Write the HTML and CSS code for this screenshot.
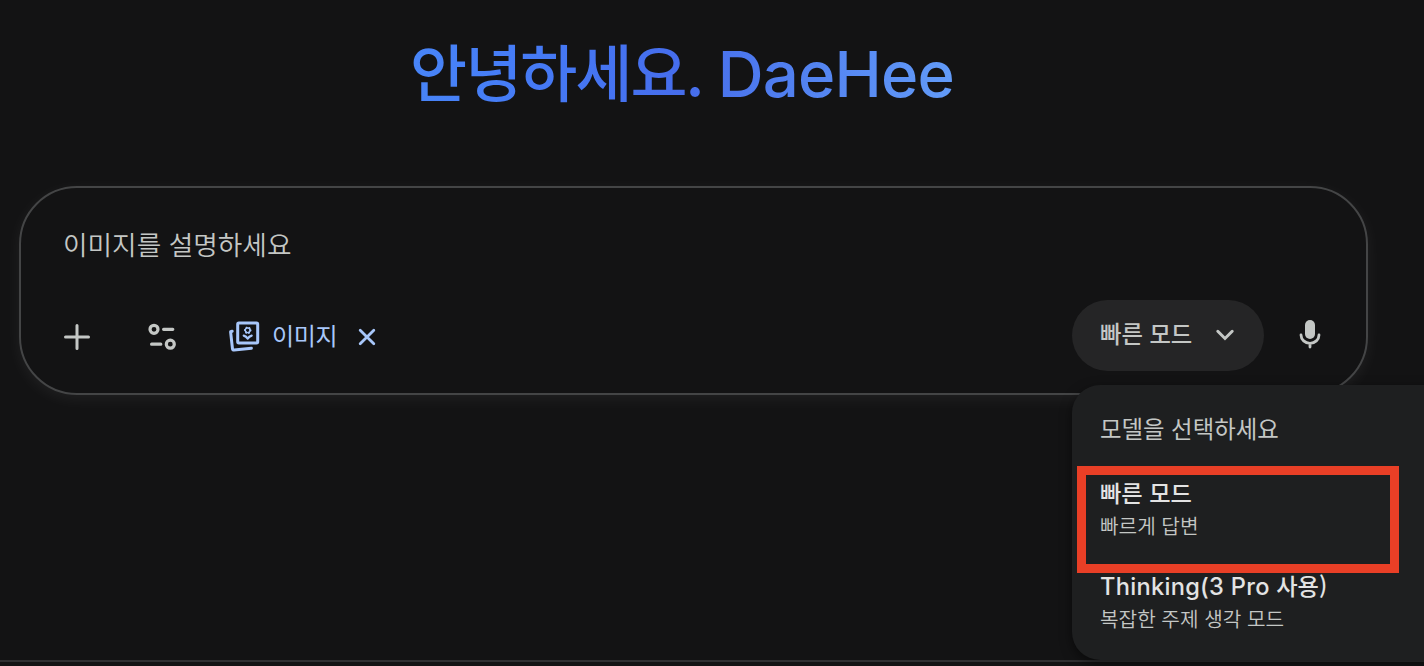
FILE: index.html
```
<!DOCTYPE html>
<html lang="ko">
<head>
    <meta charset="UTF-8">
    <meta name="viewport" content="width=device-width, initial-scale=1.0">
    <title>DaeHee</title>
    <link rel="stylesheet" href="styles.css">
</head>
<body>
    <main class="page">
        <h1 class="greeting">안녕하세요. <span class="name">DaeHee</span></h1>

        <div class="prompt">
            <div class="placeholder">이미지를 설명하세요</div>
            <div class="toolbar">
                <div class="tools">
                    <svg width="28" height="28" viewBox="0 0 28 28" fill="none" stroke="#c4c7c5" stroke-width="3" stroke-linecap="round">
                        <path d="M14 2.5v23M2.5 14h23"/>
                    </svg>
                    <svg class="icon-tune" width="30" height="30" viewBox="0 0 30 30" fill="none" stroke="#c4c7c5" stroke-width="3.2" stroke-linecap="round">
                        <circle cx="7" cy="7.3" r="4"/>
                        <path d="M16.6 7.3h9.2M4.6 22.2h9.2"/>
                        <circle cx="23.3" cy="22.2" r="4"/>
                    </svg>
                    <div class="chip">
                        <svg width="32" height="32" viewBox="0 0 32 32" fill="none" stroke="#a8c7fa" stroke-width="3" stroke-linecap="round" stroke-linejoin="round">
                            <rect x="9.7" y="2" width="20" height="20" rx="1.2"/>
                            <path d="M4.2 10.3L2.6 10.8l1.9 17q.2 1.5 1.6 1.3L23.4 27.2"/>
                            <circle cx="19.7" cy="9.3" r="2.7" stroke-width="2.2" stroke-dasharray=".1 2.727"/>
                            <circle cx="19.7" cy="9.3" r="2.4" stroke-width="1.3"/>
                            <path d="M15.7 14.6q2.6.8 4 3q1.4-2.2 4-3" stroke-width="2.2"/>
                        </svg>
                        <span>이미지</span>
                        <svg class="icon-close" width="20" height="20" viewBox="0 0 20 20" fill="none" stroke="#a8c7fa" stroke-width="2.8" stroke-linecap="round">
                            <path d="M3.2 3.2l13.6 13.6M16.8 3.2L3.2 16.8"/>
                        </svg>
                    </div>
                </div>
                <div class="mode">
                    <span>빠른 모드</span>
                    <svg width="20" height="14" viewBox="0 0 20 14" fill="none" stroke="#c4c7c5" stroke-width="3" stroke-linecap="round">
                        <path d="M2.8 3.3L10 10.5l7.2-7.2"/>
                    </svg>
                </div>
                <svg class="icon-mic" width="24" height="30" viewBox="0 0 24 30">
                    <rect x="7" y="0" width="10" height="19" rx="5" fill="#c4c7c5"/>
                    <path d="M3 15a9 8.3 0 0 0 18 0M12 23.5v3.5" fill="none" stroke="#c4c7c5" stroke-width="2.8" stroke-linecap="round"/>
                </svg>
            </div>
        </div>

        <div class="menu">
            <div class="menu-title">모델을 선택하세요</div>
            <div class="menu-item">
                <div class="item-name">빠른 모드</div>
                <div class="item-desc">빠르게 답변</div>
            </div>
            <div class="menu-item">
                <div class="item-name"><span class="latin">Thinking(3 Pro</span> 사용)</div>
                <div class="item-desc">복잡한 주제 생각 모드</div>
            </div>
        </div>
        <div class="highlight"></div>
        <footer class="bottom-line"></footer>
    </main>
</body>
</html>
```
FILE: styles.css
```
* {
    box-sizing: border-box;
}
body {
    margin: 0;
    background-color: #131314;
    color: #c4c7c5;
    font-family: 'Noto Sans CJK KR', sans-serif;
}
.page {
    position: relative;
    display: flex;
    flex-direction: column;
    height: 666px;
    overflow: hidden;
}
svg {
    display: block;
    flex-shrink: 0;
}
.greeting {
    align-self: flex-start;
    margin: 20px 0 66px 410px;
    height: 100px;
    line-height: 100px;
    font-size: 62px;
    font-weight: 500;
    letter-spacing: -1.9px;
    white-space: nowrap;
    background: linear-gradient(90deg, #4885f8 0%, #4579f5 25%, #466dec 50%, #5180f0 70%, #629bf8 100%);
    -webkit-background-clip: text;
    background-clip: text;
    color: transparent;
}
.name {
    font-family: 'Inter', sans-serif;
    font-size: 63.5px;
    font-weight: 500;
    letter-spacing: -0.8px;
}
.prompt {
    width: 1349px;
    height: 209px;
    margin-left: 19px;
    padding: 35px 43px 0 42px;
    border: 2px solid #444546;
    border-radius: 58px;
    box-shadow: 0 4px 16px rgba(255, 255, 255, 0.06);
}
.placeholder {
    height: 42px;
    line-height: 42px;
    font-size: 26.7px;
    font-weight: 350;
    white-space: nowrap;
}
.toolbar {
    display: flex;
    align-items: center;
    height: 72px;
    margin-top: 34px;
}
.tools {
    display: flex;
    align-items: center;
    padding-top: 4px;
}
.icon-tune {
    margin-left: 56px;
}
.chip {
    display: flex;
    align-items: center;
    margin-left: 51px;
    color: #a8c7fa;
    font-size: 24px;
    line-height: 36px;
    white-space: nowrap;
}
.chip span {
    margin: -4px 0 0 12px;
    letter-spacing: -0.3px;
}
.icon-close {
    margin-left: 20px;
}
.mode {
    display: flex;
    align-items: center;
    justify-content: space-between;
    width: 192px;
    height: 71px;
    margin-left: auto;
    padding: 0 29px 0 28px;
    border-radius: 36px;
    background-color: #252526;
    font-size: 23.3px;
    font-weight: 500;
    white-space: nowrap;
}
.mode span {
    margin-top: -4px;
}
.icon-mic {
    margin: 0 1px 0 34px;
}
.menu {
    position: absolute;
    left: 1072px;
    top: 385px;
    width: 400px;
    height: 275px;
    padding: 25px 28px;
    border-radius: 28px;
    background-color: #1e1f20;
    box-shadow: 0 4px 12px rgba(0, 0, 0, 0.5);
    white-space: nowrap;
}
.menu-title {
    height: 36px;
    line-height: 36px;
    margin-bottom: 28px;
    font-size: 23.4px;
}
.menu-item {
    height: 93px;
}
.item-name {
    height: 36px;
    line-height: 36px;
    color: #e3e3e3;
    font-size: 23.2px;
    font-weight: 500;
}
.latin {
    font-family: 'Inter', sans-serif;
    font-size: 23.6px;
    letter-spacing: 0.3px;
}
.item-desc {
    height: 32px;
    line-height: 32px;
    font-size: 20.2px;
    font-weight: 350;
}
/* red frame around the selected mode */
.highlight {
    position: absolute;
    left: 1077px;
    top: 466px;
    width: 322px;
    height: 107px;
    border: 9px solid #e93f26;
}
.bottom-line {
    height: 6px;
    margin-top: auto;
    border-top: 2px solid #303032;
}
```
